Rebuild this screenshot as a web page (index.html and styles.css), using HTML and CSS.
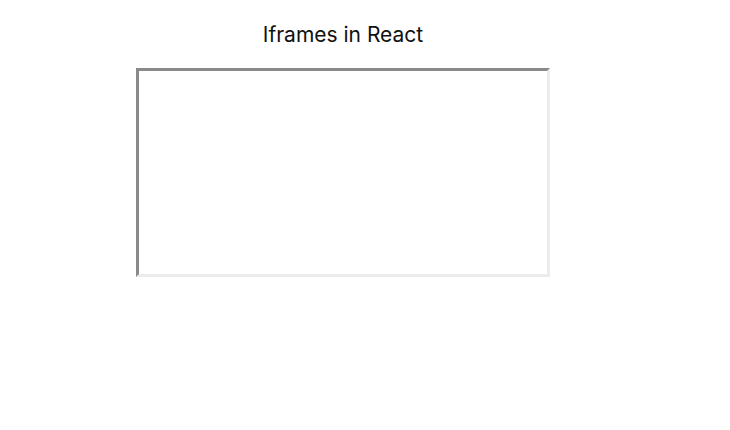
FILE: index.html
```html
<!DOCTYPE html>
<html>
<head>
<meta charset="utf-8">
<link rel="stylesheet" href="styles.css">
</head>
<body>
<div class="app">
  <h1 class="title">Iframes in React</h1>
  <div class="frame"></div>
</div>
</body>
</html>
```
FILE: styles.css
```css
html, body {
  margin: 0;
  padding: 0;
  background: #ffffff;
}
.app {
  width: 686px;
  display: flex;
  flex-direction: column;
  align-items: center;
  padding-top: 20px;
  font-family: Inter, "Noto Sans", sans-serif;
}
.title {
  margin: 0;
  font-size: 21px;
  font-weight: 400;
  line-height: 30px;
  color: #111111;
}
.frame {
  margin-top: 18px;
  width: 408px;
  height: 203px;
  border-style: solid;
  border-width: 3px;
  border-color: #8a8a8a #ececec #ececec #8a8a8a;
  background: #ffffff;
}
```
